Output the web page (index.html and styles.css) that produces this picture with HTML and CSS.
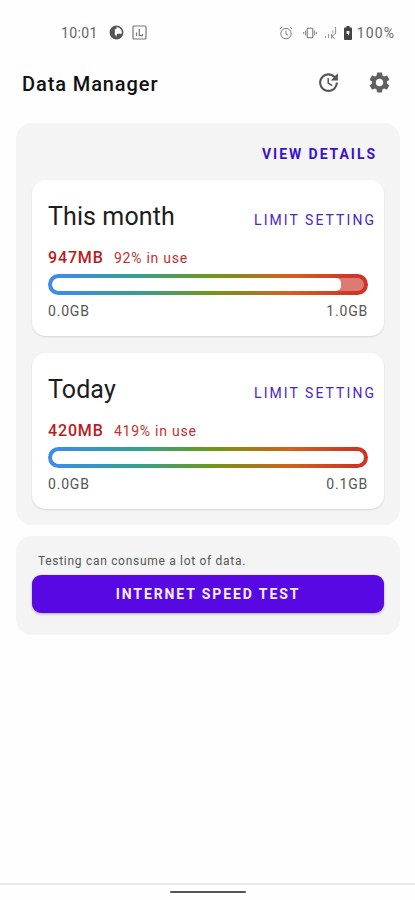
FILE: index.html
```html
<!DOCTYPE html>
<html lang="en">
<head>
<meta charset="utf-8">
<title>Data Manager</title>
<link rel="stylesheet" href="styles.css">
</head>
<body>
<header class="status">
  <div class="status-left">
    <span class="clock">10:01</span>
    <svg class="ic-app" viewBox="0 0 16 16"><circle cx="8" cy="8" r="6.6" fill="#fff" stroke="#555" stroke-width="1.6"/><path d="M8 1.4A6.6 6.6 0 0 0 5 14l3 .6V11H6.2V4.2H8zM8.6 9.2h5.6A6.6 6.6 0 0 1 8 14.6z" fill="#555"/></svg>
    <svg class="ic-chart" viewBox="0 0 15 15"><rect x="1" y="1" width="13" height="13" rx="1" fill="none" stroke="#777" stroke-width="1.2"/><path d="M4.5 7.5V11M7.3 4V11M10.5 9v2M7 10.7h4" fill="none" stroke="#777" stroke-width="1.2"/></svg>
  </div>
  <div class="status-right">
    <svg class="ic-alarm" viewBox="0 0 14 14"><circle cx="7" cy="7.6" r="5.2" fill="none" stroke="#777"/><path d="M7 4.5v3.4l2 1.3M.8 3 3.2 1M13.2 3 10.8 1" fill="none" stroke="#777"/></svg>
    <svg class="ic-vibrate" viewBox="0 0 14 14"><rect x="4.2" y="2.2" width="5.6" height="9.6" rx="1" fill="none" stroke="#777" stroke-width="1.1"/><path d="M2.4 4.5v5M11.6 4.5v5M.6 6v2M13.4 6v2" fill="none" stroke="#888"/></svg>
    <svg class="ic-signal" viewBox="0 0 13 13"><path d="M1.5 10v2M4.5 8v4M11.5 1v7M8.8 4.5v3" stroke="#999" stroke-width="1.1"/><path d="M7.5 8v4.5M10.8 8l-3 2.4 3 2.2" fill="none" stroke="#888" stroke-width="1"/></svg>
    <svg class="ic-battery" viewBox="0 0 8 14"><path d="M2.4 0h3.2v1.4H7q1 0 1 1V13q0 1-1 1H1q-1 0-1-1V2.4q0-1 1-1h1.4z" fill="#444"/><path d="M2.6 5h2.8v2.6L4.2 9.8V8H2.6z" fill="#eee"/></svg>
    <span class="percent">100%</span>
  </div>
</header>
<div class="appbar">
  <h1>Data Manager</h1>
  <svg class="ic-update" viewBox="0 0 24 24"><path fill="#555" d="M21 10.12h-6.78l2.74-2.82c-2.73-2.7-7.15-2.8-9.88-.1-2.73 2.71-2.73 7.08 0 9.79s7.15 2.71 9.88 0C18.32 15.65 19 14.08 19 12.1h2c0 1.98-.88 4.55-2.64 6.29-3.51 3.48-9.21 3.48-12.72 0-3.5-3.47-3.53-9.11-.02-12.58s9.14-3.47 12.65 0L21 3v7.12zM12.5 8v4.25l3.5 2.08-.72 1.21L11 13V8h1.5z"/></svg>
  <svg class="ic-gear" viewBox="0 0 24 24"><path fill="#606060" d="M19.14 12.94c.04-.3.06-.61.06-.94 0-.32-.02-.64-.07-.94l2.03-1.58c.18-.14.23-.41.12-.61l-1.92-3.32c-.12-.22-.37-.29-.59-.22l-2.39.96c-.5-.38-1.03-.7-1.62-.94l-.36-2.54c-.04-.24-.24-.41-.48-.41h-3.84c-.24 0-.43.17-.47.41l-.36 2.54c-.59.24-1.13.57-1.62.94l-2.39-.96c-.22-.08-.47 0-.59.22L2.74 8.87c-.12.21-.08.47.12.61l2.03 1.58c-.05.3-.09.63-.09.94s.02.64.07.94l-2.03 1.58c-.18.14-.23.41-.12.61l1.92 3.32c.12.22.37.29.59.22l2.39-.96c.5.38 1.03.7 1.62.94l.36 2.54c.05.24.24.41.48.41h3.84c.24 0 .44-.17.47-.41l.36-2.54c.59-.24 1.13-.56 1.62-.94l2.39.96c.22.08.47 0 .59-.22l1.92-3.32c.12-.22.07-.47-.12-.61l-2.01-1.58zM12 15.6c-1.98 0-3.6-1.62-3.6-3.6s1.62-3.6 3.6-3.6 3.6 1.62 3.6 3.6-1.62 3.6-3.6 3.6z"/></svg>
</div>
<main>
  <section class="panel usage">
    <a class="details">VIEW DETAILS</a>
    <article class="card">
      <div class="card-head"><h2>This month</h2><a class="limit">LIMIT SETTING</a></div>
      <div class="used"><strong>947MB</strong><span>92% in use</span></div>
      <div class="meter"><div class="track"><div class="fill" style="width:92.6%"></div></div></div>
      <div class="scale"><span>0.0GB</span><span>1.0GB</span></div>
    </article>
    <article class="card">
      <div class="card-head"><h2>Today</h2><a class="limit">LIMIT SETTING</a></div>
      <div class="used"><strong>420MB</strong><span>419% in use</span></div>
      <div class="meter"><div class="track"><div class="fill" style="width:100%"></div></div></div>
      <div class="scale"><span>0.0GB</span><span>0.1GB</span></div>
    </article>
  </section>
  <section class="panel speed">
    <p>Testing can consume a lot of data.</p>
    <button>INTERNET SPEED TEST</button>
  </section>
</main>
<footer><div class="handle"></div></footer>
</body>
</html>
```
FILE: styles.css
```css
* { box-sizing: border-box; margin: 0; padding: 0; }
body {
  height: 900px; display: flex; flex-direction: column; overflow: hidden;
  background: #fefefe; font-family: Roboto, sans-serif; color: #111;
}
svg { display: block; flex: none; }
.status {
  height: 60px; padding: 5px 20px 0 61px; display: flex; align-items: center;
  justify-content: space-between; color: #666; font-size: 14px; letter-spacing: .4px;
}
.status-left, .status-right { display: flex; align-items: center; }
.clock { width: 48px; white-space: nowrap; }
.percent { letter-spacing: 1.1px; }
.ic-app { width: 15px; height: 15px; }
.ic-chart { width: 15px; height: 15px; margin-left: 8px; }
.ic-alarm { width: 14px; height: 14px; margin-right: 10px; }
.ic-vibrate { width: 14px; height: 14px; margin-right: 7px; }
.ic-signal { width: 13px; height: 13px; margin-right: 7px; }
.ic-battery { width: 8px; height: 14px; margin-right: 5px; }
.appbar { height: 46px; padding: 0 23px 0 22px; display: flex; align-items: center; }
h1 { flex: 1; font-size: 20px; font-weight: 500; letter-spacing: .9px; line-height: 28px; padding-top: 1px; }
.ic-update { width: 25px; height: 25px; margin: -2px 26px 0 0; }
.ic-gear { width: 25px; height: 25px; margin-top: -2px; }
main { flex: 1; padding: 17px 15px 0 16px; }
.panel { border-radius: 16px; background: #f4f4f4; padding: 0 16px; overflow: hidden; }
.usage { height: 402px; display: flex; flex-direction: column; }
.details {
  height: 57px; padding: 4px 7px 0 0; text-align: right; line-height: 54px;
  color: #3a12cc; font-size: 14px; font-weight: 700; letter-spacing: 1.95px;
}
.card {
  height: 156px; margin-bottom: 17px; padding: 20px 16px 0; flex: none;
  border-radius: 14px; background: #fff; box-shadow: 0 1px 2px rgba(0,0,0,.13);
}
.card-head { display: flex; justify-content: space-between; height: 36px; margin-right: -8px; }
h2 { font-size: 25px; font-weight: 400; line-height: 34px; letter-spacing: .1px; color: #1c1c1c; }
.limit { color: #4825cc; font-size: 14px; line-height: 41px; letter-spacing: 2.05px; }
.used { display: flex; align-items: baseline; height: 37px; line-height: 44px; color: #b91c1c; }
.used strong { font-size: 16px; font-weight: 500; letter-spacing: .85px; width: 66px; }
.used span { font-size: 14px; letter-spacing: .75px; color: #c03030; }
.meter {
  height: 21px; margin-top: .5px; padding: 4px; border-radius: 11px;
  background: linear-gradient(90deg, #3b8de6 0%, #3b8de6 5%, #35a08d 28%, #719619 52%, #d4601d 76%, #cf3427 96%);
}
.track { height: 13px; border-radius: 6.5px; background: #dc7b74; overflow: hidden; }
.fill { height: 13px; border-radius: 5px; background: #fff; }
.scale { display: flex; justify-content: space-between; color: #555; font-size: 14px; line-height: 33px; letter-spacing: .8px; }
.speed { height: 99px; margin-top: 11px; }
.speed p { height: 39px; padding: 13px 6px 0; font-size: 12px; line-height: 24px; letter-spacing: .7px; color: #555; }
button {
  display: block; width: 100%; height: 38px; border: 0; border-radius: 9px;
  background: #5808e2; color: #f6efff; box-shadow: 0 1px 3px rgba(0,0,0,.3);
  font: 700 14px Roboto, sans-serif; letter-spacing: 1.9px;
}
footer { height: 17px; border-top: 2px solid #ebebeb; padding-top: 6px; }
.handle { width: 76px; height: 2px; margin: 0 auto; background: #555; border-radius: 1px; }
```
